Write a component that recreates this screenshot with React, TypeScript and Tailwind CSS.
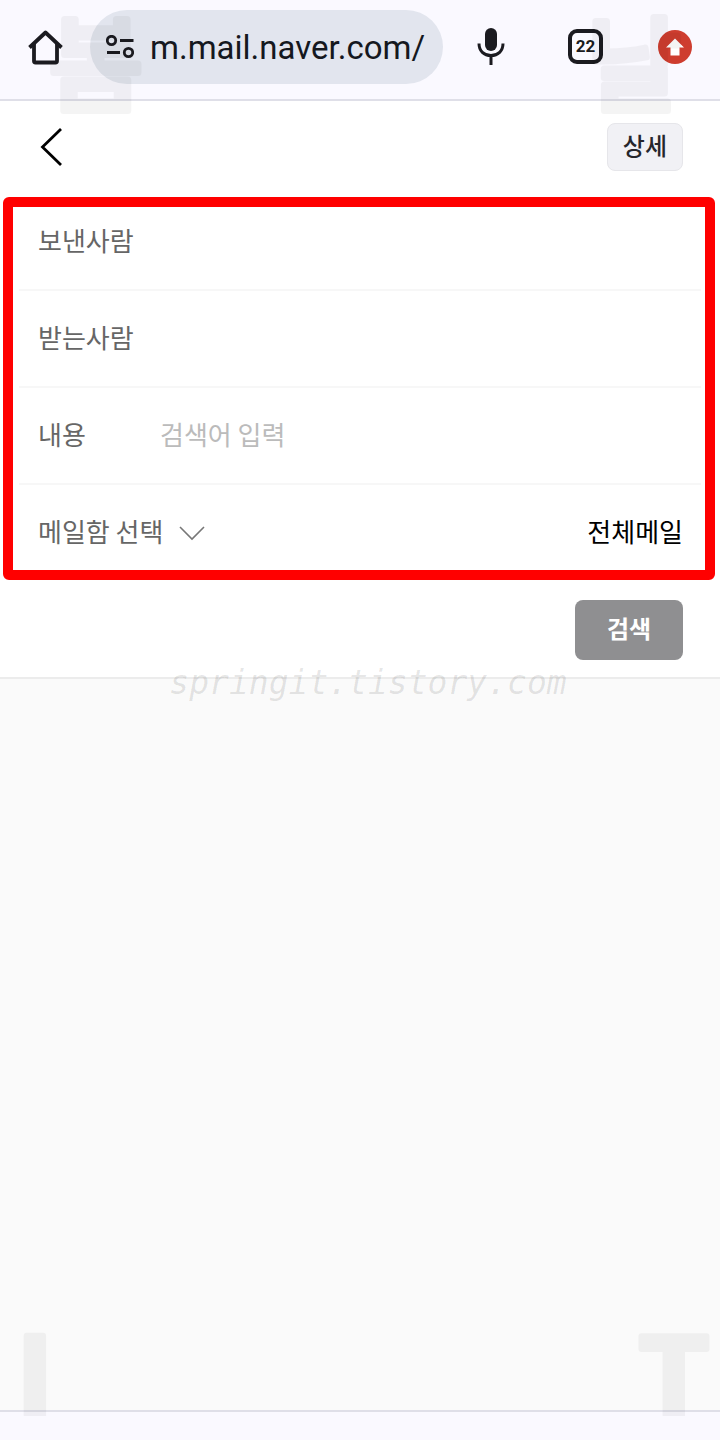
import React from "react";

interface FieldRow {
  id: string;
  label: string;
  placeholder?: string;
}

const fields: FieldRow[] = [
  { id: "sender", label: "보낸사람" },
  { id: "receiver", label: "받는사람" },
  { id: "content", label: "내용", placeholder: "검색어 입력" },
];

const HomeIcon = () => (
  <svg width="36" height="36" viewBox="0 0 36 36" fill="none" stroke="#1b1b20" strokeWidth="3.8" strokeLinejoin="round">
    <path d="M1.5 18.5 17.5 3.5 33.5 18.5" />
    <path d="M6 15v17q0 1.5 1.5 1.5h20q1.5 0 1.5-1.5V15" />
  </svg>
);

const SiteSettingsIcon = () => (
  <svg width="28" height="24" viewBox="0 0 28 24" fill="none" stroke="#1b1b20" strokeWidth="2.8" className="shrink-0">
    <circle cx="5.5" cy="5.5" r="4.2" />
    <path d="M14 5.5h13.5M1 17.5h13" />
    <circle cx="22.5" cy="17.5" r="4.2" />
  </svg>
);

const MicIcon = () => (
  <svg width="28" height="40" viewBox="0 0 28 40" fill="none">
    <rect x="8" y="1" width="12" height="23" rx="6" fill="#1b1b20" />
    <path d="M2 16.5C2 24 7 28.5 14 28.5S26 24 26 16.5M14 28.5V38" stroke="#1b1b20" strokeWidth="3" />
  </svg>
);

const UpdateIcon = () => (
  <svg width="34" height="34" viewBox="0 0 34 34">
    <circle cx="17" cy="17" r="17" fill="#ce3d2f" />
    <path d="M17 8.5 26 17.5H21.5V25.5H12.5V17.5H8Z" fill="#fff" />
  </svg>
);

const BrowserBar = () => (
  <header className="flex h-[101px] items-center border-b-2 border-[#dfdfe8] bg-[#faf9ff] px-7 pb-1.5 font-[Roboto,sans-serif]">
    <button type="button" aria-label="홈">
      <HomeIcon />
    </button>
    <div className="ml-[26px] mr-[34px] flex h-[74px] min-w-0 flex-1 items-center gap-4 rounded-full bg-[#e2e5ee] pl-4 pr-3">
      <SiteSettingsIcon />
      <input
        aria-label="주소"
        defaultValue="m.mail.naver.com/"
        className="w-full min-w-0 bg-transparent pt-0.5 text-[33px] text-[#15181e] outline-none"
      />
    </div>
    <button type="button" aria-label="음성 검색">
      <MicIcon />
    </button>
    <button
      type="button"
      aria-label="탭 22개"
      className="ml-[63px] flex size-[35px] items-center justify-center rounded-[9px] border-4 border-[#1b1b20] text-[17px] font-bold text-[#1b1b20]"
    >
      22
    </button>
    <button type="button" aria-label="업데이트" className="ml-[55px]">
      <UpdateIcon />
    </button>
  </header>
);

const SearchForm = () => (
  <form className="border-b-2 border-[#ececec] bg-white pb-[17px]" onSubmit={(e) => e.preventDefault()}>
    <div className="flex h-[93px] items-center justify-between px-[37px] pb-0.5">
      <button type="button" aria-label="뒤로">
        <svg width="28" height="40" viewBox="0 0 28 40" fill="none" stroke="#000" strokeWidth="2.8">
          <path d="M24 2 5.5 20 24 38" />
        </svg>
      </button>
      <button
        type="button"
        className="h-12 rounded-lg border border-[#e6e6ea] bg-[#f1f1f5] px-[15px] pb-1 text-2xl font-medium text-[#26262c]"
      >
        상세
      </button>
    </div>

    <div className="relative px-[19px] text-[26px] text-[#666]">
      {fields.map((field) => (
        <div key={field.id} className="flex h-[97px] items-center border-b-2 border-[#f7f7f7] px-[19px] pb-1">
          <label htmlFor={field.id} className="w-[122px] shrink-0">
            {field.label}
          </label>
          <input
            id={field.id}
            placeholder={field.placeholder}
            className="w-full min-w-0 bg-transparent text-[#111] outline-none placeholder:text-[#bbb]"
          />
        </div>
      ))}
      <div className="flex h-[95px] items-center justify-between pb-1 pl-[19px] pr-[18px]">
        <label htmlFor="mailbox" className="flex items-center gap-4">
          메일함 선택
          <svg width="26" height="16" viewBox="0 0 26 16" fill="none" stroke="#777" strokeWidth="1.6" className="mt-1">
            <path d="M1 2 13 14 25 2" />
          </svg>
        </label>
        <select id="mailbox" className="appearance-none bg-transparent text-right text-black outline-none">
          <option>전체메일</option>
        </select>
      </div>
      {/* highlight frame over the fields */}
      <div className="pointer-events-none absolute bottom-0 left-[3px] right-[5px] top-[3px] rounded-md border-10 border-[#f00]" />
    </div>

    <div className="flex justify-end px-[37px] pt-5">
      <button type="submit" className="h-[60px] w-[108px] rounded-lg bg-[#8f8f91] pb-1 text-2xl font-bold text-white">
        검색
      </button>
    </div>
  </form>
);

interface MarkProps {
  char: string;
  className: string;
}

const HangulMark = ({ char, className }: MarkProps) => (
  <svg
    width="124"
    height="130"
    className={`absolute top-0 font-medium opacity-4 ${className}`}
    fill="#000"
    stroke="#000"
    strokeWidth="7"
    strokeLinejoin="round"
  >
    <text x="62" y="103" fontSize="102" textAnchor="middle">
      {char}
    </text>
  </svg>
);

const LatinMark = ({ char, className }: MarkProps) => (
  <svg
    width="80"
    height="92"
    className={`absolute bottom-6 font-[Roboto,sans-serif] font-bold opacity-4 ${className}`}
    fill="#000"
    stroke="#000"
    strokeWidth="6"
    strokeLinejoin="round"
  >
    <text x="40" y="91" fontSize="112" textAnchor="middle">
      {char}
    </text>
  </svg>
);

const Watermarks = () => (
  <div className="pointer-events-none absolute inset-0 select-none overflow-hidden">
    <HangulMark char="봄" className="left-[34px]" />
    <HangulMark char="날" className="right-6" />
    <LatinMark char="I" className="-left-[5px]" />
    <LatinMark char="T" className="right-1.5" />
    <p className="absolute inset-x-0 top-[658px] pl-4 text-center font-['DejaVu_Sans_Mono',monospace] text-[33px] italic text-black/10">
      springit.tistory.com
    </p>
  </div>
);

export default function App() {
  return (
    <main className="relative flex min-h-screen w-full flex-col bg-[#fafafa] font-['Noto_Sans_CJK_KR',sans-serif]">
      <BrowserBar />
      <SearchForm />
      <div className="flex-1" />
      <footer className="h-[30px] border-t-2 border-[#dfdfe8] bg-[#faf9ff]" />
      <Watermarks />
    </main>
  );
}
